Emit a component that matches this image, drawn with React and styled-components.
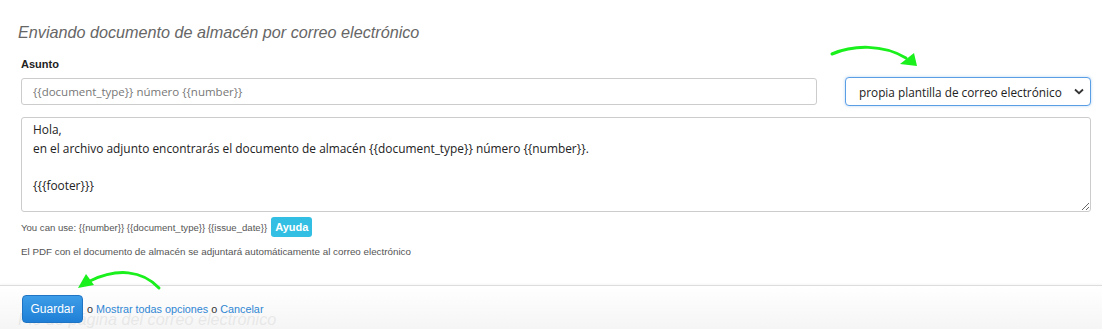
import { styled, createGlobalStyle } from "styled-components";

const GlobalStyle = createGlobalStyle`
  html, body {
    margin: 0;
    padding: 0;
    background: #fff;
    font-family: "Liberation Sans", Arial, sans-serif;
    overflow: hidden;
  }
`;

const Page = styled.div`
  position: relative;
  height: 329px;
  padding: 0 11px 0 21px;
`;

const Heading = styled.h2`
  margin: 0 0 0 -3px;
  padding-top: ${(props) => props.$top || 0}px;
  font-size: 16.2px;
  font-weight: normal;
  font-style: italic;
  color: #666;
  line-height: 20px;
`;

const Label = styled.label`
  display: block;
  margin-top: 15px;
  font-size: 11px;
  font-weight: bold;
  color: #222;
  line-height: 14px;
`;

const SubjectRow = styled.div`
  display: flex;
  align-items: center;
  gap: 28px;
  margin-top: 6px;
`;

const SubjectInput = styled.input`
  flex: 1;
  box-sizing: border-box;
  height: 27px;
  margin: 0;
  padding: 0 11px;
  border: 1px solid #ccc;
  border-radius: 3px;
  font-family: "Open Sans", sans-serif;
  font-size: 11.5px;
  color: #555;
  &::placeholder {
    color: #777;
  }
  &:focus {
    outline: none;
  }
`;

const SelectWrap = styled.div`
  position: relative;
  width: 246px;
`;

const Select = styled.select`
  appearance: none;
  width: 100%;
  box-sizing: border-box;
  height: 29px;
  margin: 0;
  padding: 0 22px 0 13px;
  border: 1px solid #5a9fe6;
  border-radius: 4px;
  box-shadow: 0 0 3px rgba(90, 159, 230, 0.45);
  background: #fff;
  font-family: "Open Sans", sans-serif;
  font-size: 11.8px;
  color: #222;
  outline: none;
`;

const Chevron = styled.svg`
  position: absolute;
  right: 7px;
  top: 11px;
  pointer-events: none;
`;

const Body = styled.textarea`
  display: block;
  box-sizing: border-box;
  width: 100%;
  height: 95px;
  margin: 11px 0 0;
  padding: 2px 11px;
  border: 1px solid #ccc;
  border-radius: 3px;
  font-family: "Open Sans", sans-serif;
  font-size: 11.9px;
  line-height: 18.5px;
  color: #222;
  outline: none;
`;

const HelpLine = styled.div`
  display: flex;
  align-items: center;
  gap: 4px;
  margin-top: 5px;
  font-size: 9.6px;
  color: #555;
`;

const HelpButton = styled.button`
  height: 20px;
  padding: 0 4px;
  border: none;
  border-radius: 3px;
  background: #32bfe3;
  color: #fff;
  font-family: "Liberation Sans", Arial, sans-serif;
  font-size: 11px;
  font-weight: bold;
`;

const Note = styled.p`
  margin: 9px 0 0;
  font-size: 9.8px;
  color: #555;
  line-height: 12px;
`;

const Footer = styled.div`
  position: absolute;
  left: 0;
  right: 0;
  bottom: 0;
  height: 44px;
  display: flex;
  align-items: center;
  gap: 3px;
  padding: 2px 22px 0;
  box-sizing: border-box;
  border-top: 1px solid #ddd;
  background: linear-gradient(
    rgba(255, 255, 255, 0.88),
    rgba(244, 244, 244, 0.9)
  );
  box-shadow: 0 -1px 2px rgba(0, 0, 0, 0.04);
  font-size: 10.8px;
  color: #333;
`;

const SaveButton = styled.button`
  height: 28px;
  width: 61px;
  margin-right: 1px;
  border: 1px solid #1f74c4;
  border-radius: 4px;
  background: linear-gradient(#3d9de8, #1f7fd6);
  color: #fff;
  font-family: "Liberation Sans", Arial, sans-serif;
  font-size: 12px;
`;

const Link = styled.a`
  color: #2f86d4;
  text-decoration: none;
`;

const Arrow = styled.svg`
  position: absolute;
  left: ${(props) => props.$x}px;
  top: ${(props) => props.$y}px;
  pointer-events: none;
`;

export default function App() {
  return (
    <>
      <GlobalStyle />
      <Page>
        <Heading $top={22}>
          Enviando documento de almacén por correo electrónico
        </Heading>
        <Label>Asunto</Label>
        <SubjectRow>
          <SubjectInput placeholder="{{document_type}} número {{number}}" />
          <SelectWrap>
            <Select defaultValue="own">
              <option value="own">propia plantilla de correo electrónico</option>
            </Select>
            <Chevron width="10" height="7" viewBox="0 0 10 7">
              <path
                d="M1 1.5 L5 5.2 L9 1.5"
                fill="none"
                stroke="#333"
                strokeWidth="1.8"
              />
            </Chevron>
          </SelectWrap>
        </SubjectRow>
        <Body
          defaultValue={
            "Hola,\nen el archivo adjunto encontrarás el documento de almacén {{document_type}} número {{number}}.\n\n{{{footer}}}"
          }
        />
        <HelpLine>
          You can use: {"{{number}} {{document_type}} {{issue_date}}"}
          <HelpButton type="button">Ayuda</HelpButton>
        </HelpLine>
        <Note>
          El PDF con el documento de almacén se adjuntará automáticamente al
          correo electrónico
        </Note>
        <Heading $top={51}>Pie de página del correo electrónico</Heading>

        <Footer>
          <SaveButton type="button">Guardar</SaveButton>o
          <Link href="#">Mostrar todas opciones</Link>o
          <Link href="#">Cancelar</Link>
        </Footer>

        <Arrow $x={828} $y={40} width="95" height="30" viewBox="0 0 95 30">
          <path
            d="M4 14 C 25 5, 55 4, 78 18"
            fill="none"
            stroke="#19f01c"
            strokeWidth="3"
            strokeLinecap="round"
          />
          <path d="M72 24 L86 13 L89 26 Z" fill="#19f01c" />
        </Arrow>
        <Arrow $x={72} $y={264} width="95" height="30" viewBox="0 0 95 30">
          <path
            d="M87 24 C 70 6, 45 4, 18 17"
            fill="none"
            stroke="#19f01c"
            strokeWidth="3"
            strokeLinecap="round"
          />
          <path d="M6 24 L14 10 L22 21 Z" fill="#19f01c" />
        </Arrow>
      </Page>
    </>
  );
}
